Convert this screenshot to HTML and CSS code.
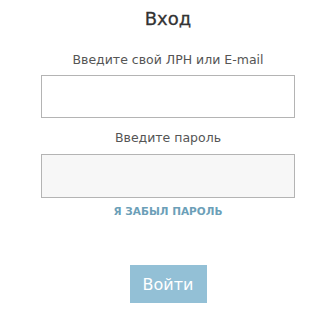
FILE: index.html
```html
<!DOCTYPE html>
<html lang="ru">
<head>
    <meta charset="UTF-8">
    <meta name="viewport" content="width=device-width, initial-scale=1.0">
    <title>Вход</title>
    <link rel="stylesheet" href="styles.css">
</head>
<body>
    <form class="login" onsubmit="return false">
        <h1 class="login-title">Вход</h1>
        <label class="login-label" for="login">Введите свой ЛРН или E-mail</label>
        <input class="login-input" id="login" type="text">
        <label class="login-label" for="password">Введите пароль</label>
        <input class="login-input login-input-pass" id="password" type="password">
        <a href="#" class="login-forgot">Я ЗАБЫЛ ПАРОЛЬ</a>
        <button class="login-button" type="submit">Войти</button>
    </form>
</body>
</html>
```

FILE: styles.css
```css
body {
    margin: 0;
    padding-left: 10px;
    background-color: #fff;
    font-family: 'DejaVu Sans', sans-serif;
    color: #444;
}

.login {
    width: 254px;
    margin: 0 auto;
    display: flex;
    flex-direction: column;
    align-items: center;
}

.login-title {
    margin: 8px 0 0;
    font-size: 18px;
    line-height: 22px;
    font-weight: normal;
    -webkit-text-stroke: 0.3px #333;
    color: #333;
}

.login-label {
    margin-top: 22px;
    font-size: 12.5px;
    line-height: 16px;
    color: #555;
}

.login-input {
    box-sizing: border-box;
    width: 100%;
    height: 43px;
    margin-top: 7px;
    border: 1px solid #b4b4b4;
    background-color: #fff;
    font-size: 14px;
    padding: 0 10px;
    outline: none;
}

.login-input-pass {
    height: 44px;
    margin-top: 8px;
    background-color: #f7f7f7;
}

.login-input + .login-label {
    margin-top: 12px;
}

.login-forgot {
    margin-top: 6px;
    font-size: 10.5px;
    line-height: 14px;
    font-weight: bold;
    color: #6c9fb8;
    text-decoration: none;
}

.login-button {
    margin-top: 47px;
    width: 77px;
    height: 38px;
    border: none;
    background-color: #93c0d6;
    color: #fff;
    font-family: 'DejaVu Sans', sans-serif;
    font-size: 16px;
    cursor: pointer;
}
```
